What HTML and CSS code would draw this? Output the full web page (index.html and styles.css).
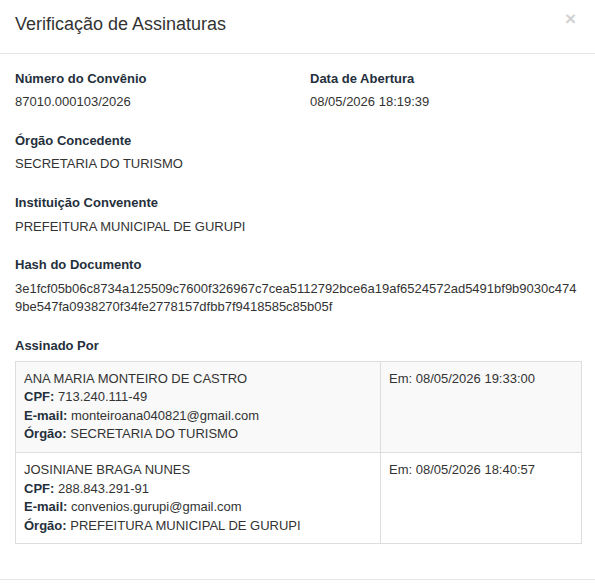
FILE: index.html
```html
<!DOCTYPE html>
<html lang="pt-BR">
<head>
<meta charset="utf-8">
<title>Verificação de Assinaturas</title>
<link rel="stylesheet" href="styles.css">
</head>
<body>
<div class="modal">
  <div class="modal-header">
    <h4 class="modal-title">Verificação de Assinaturas</h4>
    <button class="close" type="button" aria-label="Fechar">×</button>
  </div>
  <div class="modal-body">
    <div class="row">
      <div class="field">
        <div class="label">Número do Convênio</div>
        <div class="value">87010.000103/2026</div>
      </div>
      <div class="field">
        <div class="label">Data de Abertura</div>
        <div class="value">08/05/2026 18:19:39</div>
      </div>
    </div>
    <div class="field">
      <div class="label">Órgão Concedente</div>
      <div class="value">SECRETARIA DO TURISMO</div>
    </div>
    <div class="field">
      <div class="label">Instituição Convenente</div>
      <div class="value">PREFEITURA MUNICIPAL DE GURUPI</div>
    </div>
    <div class="field">
      <div class="label">Hash do Documento</div>
      <div class="value hash">3e1fcf05b06c8734a125509c7600f326967c7cea5112792bce6a19af6524572ad5491bf9b9030c474 9be547fa0938270f34fe2778157dfbb7f9418585c85b05f</div>
    </div>
    <div class="field">
      <div class="label">Assinado Por</div>
      <table class="signers">
        <tr class="odd">
          <td class="who">ANA MARIA MONTEIRO DE CASTRO<br><b>CPF:</b> 713.240.111-49<br><b>E-mail:</b> monteiroana040821@gmail.com<br><b>Órgão:</b> SECRETARIA DO TURISMO</td>
          <td class="when">Em: 08/05/2026 19:33:00</td>
        </tr>
        <tr>
          <td class="who">JOSINIANE BRAGA NUNES<br><b>CPF:</b> 288.843.291-91<br><b>E-mail:</b> convenios.gurupi@gmail.com<br><b>Órgão:</b> PREFEITURA MUNICIPAL DE GURUPI</td>
          <td class="when">Em: 08/05/2026 18:40:57</td>
        </tr>
      </table>
    </div>
  </div>
  <div class="modal-footer"></div>
</div>
</body>
</html>
```

FILE: styles.css
```css
* { box-sizing: border-box; }
html, body {
  margin: 0;
  padding: 0;
  background: #fff;
}
body {
  font-family: "Liberation Sans", Arial, sans-serif;
  font-size: 13px;
  line-height: 1.42857;
  color: #333;
}
.modal {
  width: 595px;
  background: #fff;
}
.modal-header {
  display: flex;
  align-items: flex-start;
  justify-content: space-between;
  padding: 12px 15px 15px 15px;
  border-bottom: 1px solid #e5e5e5;
}
.modal-title {
  margin: 0;
  font-size: 18px;
  font-weight: normal;
  line-height: 1.42857;
  color: #333;
}
.close {
  border: 0;
  background: transparent;
  padding: 0;
  margin: -3px 4px 0 0;
  font-family: "Liberation Sans", Arial, sans-serif;
  font-size: 19px;
  font-weight: bold;
  line-height: 1;
  color: #000;
  opacity: 0.18;
  cursor: pointer;
}
.modal-body {
  padding: 16px 13px 15px 15px;
}
.row {
  display: grid;
  grid-template-columns: 295px 1fr;
}
.field {
  margin-bottom: 20.1px;
}
.label {
  font-weight: bold;
  color: #25303c;
  margin-bottom: 5px;
}
.value {
  color: #333;
}
.hash {
  word-break: break-all;
}
.signers {
  width: 100%;
  border-collapse: collapse;
  border: 1px solid #ddd;
}
.signers td {
  border: 1px solid #ddd;
  padding: 8px;
  vertical-align: top;
  color: #333;
}
.signers td b {
  color: #25303c;
}
.signers tr.odd td {
  background: #f9f9f9;
}
.signers .who {
  width: 365px;
}
.modal-footer {
  border-top: 1px solid #e5e5e5;
  height: 10px;
}
```
